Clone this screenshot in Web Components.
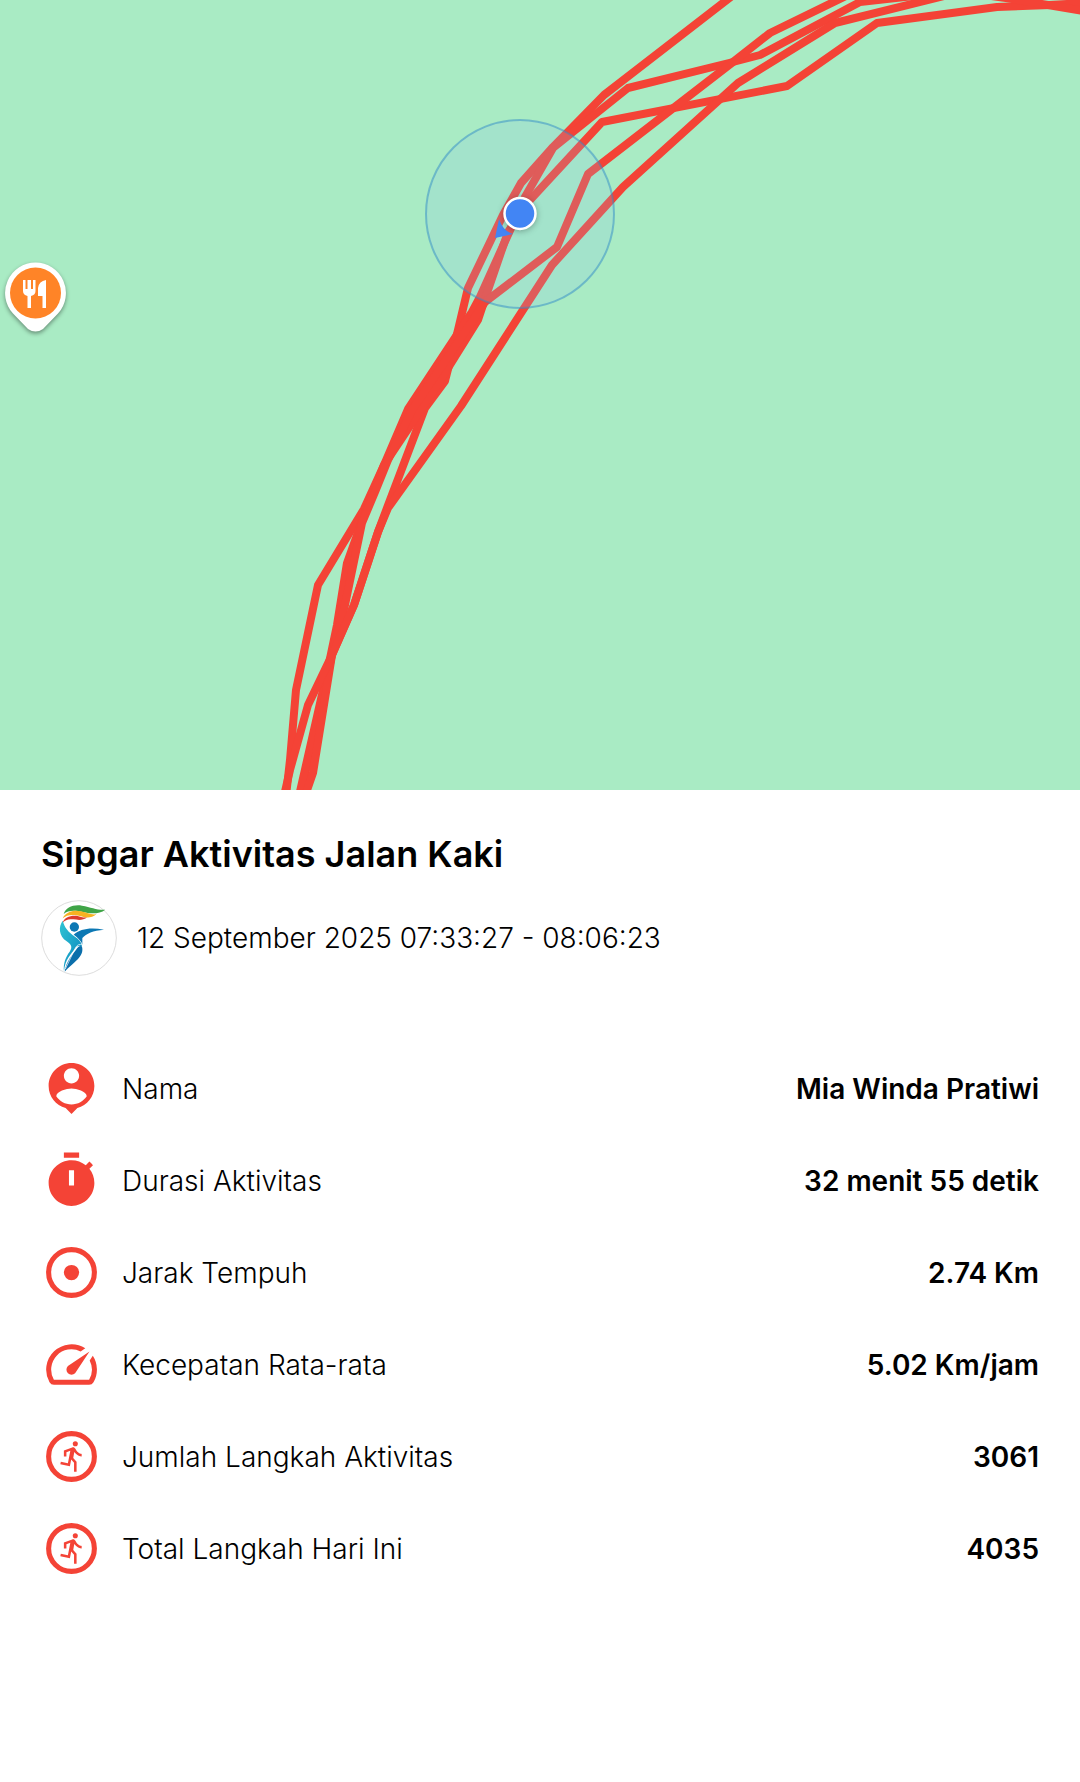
<!DOCTYPE html>
<html lang="id">
<head>
<meta charset="utf-8">
<meta name="viewport" content="width=device-width, initial-scale=1">
<title>Sipgar Aktivitas Jalan Kaki</title>
<style>
  body {
    margin: 0;
    background: #fff;
    color: #000;
    font-family: Inter, "Open Sans", sans-serif;
  }
</style>
</head>
<body>
<activity-page>
  <route-map slot="map"></route-map>
  <activity-header>
    Sipgar Aktivitas Jalan Kaki
    <time slot="time" datetime="2025-09-12T07:33:27">12 September 2025 07:33:27 - 08:06:23</time>
  </activity-header>
  <stat-list>
    <stat-row icon="person">Nama<b slot="value">Mia Winda Pratiwi</b></stat-row>
    <stat-row icon="timer">Durasi Aktivitas<b slot="value">32 menit 55 detik</b></stat-row>
    <stat-row icon="target">Jarak Tempuh<b slot="value">2.74 Km</b></stat-row>
    <stat-row icon="speed">Kecepatan Rata-rata<b slot="value">5.02 Km/jam</b></stat-row>
    <stat-row icon="run">Jumlah Langkah Aktivitas<b slot="value">3061</b></stat-row>
    <stat-row icon="run">Total Langkah Hari Ini<b slot="value">4035</b></stat-row>
  </stat-list>
</activity-page>

<script>
const ring = '<circle cx="12" cy="12" r="9" fill="none" stroke="currentColor" stroke-width="2"/>';

const icons = {
  person: '<path d="M12 2c-4.97 0-9 4.03-9 9 0 4.17 2.84 7.67 6.69 8.69L12 22l2.31-2.31C18.16 18.67 21 15.17 21 11c0-4.97-4.03-9-9-9zm0 2c1.66 0 3 1.34 3 3s-1.34 3-3 3-3-1.34-3-3 1.34-3 3-3zm0 14.3c-2.5 0-4.71-1.28-6-3.22.03-1.99 4-3.08 6-3.08 1.99 0 5.97 1.09 6 3.08-1.29 1.94-3.5 3.22-6 3.22z"/>',
  timer: '<path fill-rule="evenodd" d="M15 1H9v2h6V1zM11 14h2V8h-2v6zM19.03 7.39l1.42-1.42c-.43-.51-.9-.99-1.41-1.41l-1.42 1.42C16.07 4.74 14.12 4 12 4c-4.97 0-9 4.03-9 9s4.02 9 9 9 9-4.03 9-9c0-2.12-.74-4.07-1.97-5.61z"/>',
  target: ring + '<circle cx="12" cy="12" r="3"/>',
  speed: '<path d="m20.38 8.57-1.23 1.85a8 8 0 0 1-.22 7.58H5.07A8 8 0 0 1 15.58 6.85l1.85-1.23A10 10 0 0 0 3.35 19a2 2 0 0 0 1.72 1h13.85a2 2 0 0 0 1.74-1 10 10 0 0 0-.27-10.44zm-9.79 6.84a2 2 0 0 0 2.83 0l5.66-8.49-8.49 5.66a2 2 0 0 0 0 2.83z"/>',
  run: ring + '<circle cx="13.5" cy="7" r="1"/><path d="M16 12c-.7 0-2.01-.54-2.91-1.76l-.41 2.35L14 14.03V18h-1v-3.58l-1.11-1.21-.52 2.64-3.77-.77.2-.98 2.78.57.96-4.89-1.54.57V12H9V9.65l3.28-1.21c.49-.18 1.03.06 1.26.53C14.37 10.67 15.59 11 16 11v1z"/>'
};

const laps = [
  '732,-4 604,95 553,147 521,183 503,215 468,288 458,330 445,381 425,408 387,508 378,532 354,605 332,655 322,700 300,796',
  '914,-4 860,2 760,55 733,62 628,88 553,148 525,197 507,237 480,297 472,312 408,409 384,465 364,509 318,585 296,690 290,760 286,796',
  '1084,3 1050,5 997,7 877,23 787,86 602,122 530,200 508,232 487,293 478,320 440,381 384,465 366,510 347,563 337,625 328,668 299,796',
  '850,-6 770,33 733,62 588,174 557,247 485,302 475,317 412,410 388,460 375,492 362,523 345,605 332,655 313,773 305,796',
  '944,-4 835,23 738,83 623,187 552,265 461,406 388,508 378,532 354,605 332,655 308,705 290,770 284,796',
  '984,-5 1006,-2 1084,11'
];

class RouteMap extends HTMLElement {
  constructor() {
    super();
    this.attachShadow({ mode: 'open' });
    this.shadowRoot.innerHTML = `
      <style>
        :host {
          display: block;
          background: #a9ebc4;
        }
        svg {
          display: block;
          width: 100%;
          height: auto;
        }
        .lap {
          fill: none;
          stroke: #f44336;
          stroke-width: 8;
          stroke-linejoin: round;
        }
        .pin {
          filter: drop-shadow(0 2px 2px rgba(0, 0, 0, .4));
        }
        .me {
          filter: drop-shadow(0 1px 3px rgba(0, 0, 0, .3));
        }
      </style>
      <svg viewBox="0 0 1080 790" role="img" aria-label="Peta rute">
        ${laps.map(points => `<polyline class="lap" points="${points}"/>`).join('')}
        <circle cx="520" cy="214" r="94" fill="rgba(139, 195, 236, .2)" stroke="rgba(50, 140, 200, .5)" stroke-width="2"/>
        <path d="M499 219Q503 231 513 234L495 238Z" fill="#4285f4"/>
        <circle class="me" cx="520" cy="213.5" r="15.5" fill="#4285f4" stroke="#fff" stroke-width="2.5"/>
        <g class="pin">
          <path d="M35.5 262.5a30.5 30.5 0 0 1 22.5 51L43 329q-7.5 5-15 0L13 313.500a30.5 30.5 0 0 1 22.5-51z" fill="#fff"/>
          <circle cx="35.5" cy="293" r="25.5" fill="#ff8427"/>
        </g>
        <g fill="#fff">
          <path d="M23 280h2.500v9h2v-9H31v9h2v-9h2.500v11q0 4-4.500 5v12h-3.500v-12q-4.500-1-4.500-5z"/>
          <path d="M46 280v28h-3.500v-12H38v-8q1-7 8-8z"/>
        </g>
      </svg>
    `;
  }
}

class ClubLogo extends HTMLElement {
  constructor() {
    super();
    this.attachShadow({ mode: 'open' });
    this.shadowRoot.innerHTML = `
      <style>
        :host {
          display: block;
          flex: none;
          width: 76px;
          height: 76px;
        }
        svg {
          display: block;
        }
      </style>
      <svg viewBox="15 15 228 228" role="img" aria-label="Sipgar">
        <defs>
          <linearGradient id="body" x1="0" y1="0" x2="1" y2="1">
            <stop offset="0" stop-color="#2fc3d3"/>
            <stop offset="1" stop-color="#0a86be"/>
          </linearGradient>
        </defs>
        <circle cx="129" cy="129" r="112" fill="#fff" stroke="#ddd" stroke-width="3"/>
        <path d="M83 57C89 37 112 28 138 32C166 37 184 46 208 44C190 58 163 56 140 51C115 45 96 46 83 57Z" fill="#3fa447"/>
        <path d="M80 70C89 51 112 44 135 49C154 54 164 60 181 58C166 71 150 69 135 64C112 57 93 58 80 70Z" fill="#f7b322"/>
        <path d="M80 84C84 67 105 60 125 63C140 67 145 69 154 67C141 77 126 75 112 73C97 71 88 74 80 84Z" fill="#dc3b2d"/>
        <circle cx="115" cy="96" r="14" fill="#0c78b4"/>
        <path d="M80 77C86 99 98 112 116 124C131 133 140 143 138 156C132 150 124 152 119 158C105 178 87 192 84 229C81 205 90 184 101 170C112 155 103 147 92 139C68 122 67 95 80 77Z" fill="url(#body)"/>
        <path d="M113 119C132 101 164 96 204 104C171 107 151 115 139 129L139 149C134 136 124 127 113 119Z" fill="#0c78b4"/>
        <path d="M86 230C91 198 108 181 124 159Q131 150 138 155C146 185 112 201 86 230Z" fill="#0b6fab"/>
        <path d="M113 121Q137 138 138 150Q128 144 119 157L88 222" fill="none" stroke="#fff" stroke-width="2"/>
      </svg>
    `;
  }
}

class ActivityHeader extends HTMLElement {
  constructor() {
    super();
    this.attachShadow({ mode: 'open' });
    this.shadowRoot.innerHTML = `
      <style>
        :host {
          display: flex;
          flex-direction: column;
          gap: 22px;
        }
        h1 {
          margin: 0;
          font-size: 36px;
          font-weight: 600;
          line-height: 48px;
        }
        .when {
          display: flex;
          align-items: center;
          gap: 20px;
          font-size: 28px;
          font-weight: 300;
          line-height: 40px;
        }
      </style>
      <h1><slot></slot></h1>
      <div class="when">
        <club-logo></club-logo>
        <slot name="time"></slot>
      </div>
    `;
  }
}

class StatList extends HTMLElement {
  constructor() {
    super();
    this.attachShadow({ mode: 'open' });
    this.shadowRoot.innerHTML = `
      <style>
        :host {
          display: flex;
          flex-direction: column;
          gap: 31px;
        }
      </style>
      <slot></slot>
    `;
  }
}

class StatRow extends HTMLElement {
  constructor() {
    super();
    this.attachShadow({ mode: 'open' });
    this.shadowRoot.innerHTML = `
      <style>
        :host {
          display: flex;
          align-items: center;
          gap: 20px;
          font-size: 28px;
          font-weight: 300;
          line-height: 40px;
        }
        svg {
          flex: none;
          width: 61px;
          height: 61px;
          color: #f44336;
          fill: currentColor;
        }
        .label {
          flex: 1;
        }
        ::slotted(b) {
          font-weight: 600;
          text-align: right;
        }
      </style>
      <svg viewBox="0 0 24 24" aria-hidden="true"></svg>
      <span class="label"><slot></slot></span>
      <slot name="value"></slot>
    `;
  }

  connectedCallback() {
    this.shadowRoot.querySelector('svg').innerHTML = icons[this.getAttribute('icon')];
  }
}

class ActivityPage extends HTMLElement {
  constructor() {
    super();
    this.attachShadow({ mode: 'open' });
    this.shadowRoot.innerHTML = `
      <style>
        :host {
          display: block;
        }
        main {
          display: flex;
          flex-direction: column;
          gap: 82px;
          padding: 40px 41px;
        }
      </style>
      <slot name="map"></slot>
      <main><slot></slot></main>
    `;
  }
}

customElements.define('route-map', RouteMap);
customElements.define('club-logo', ClubLogo);
customElements.define('activity-header', ActivityHeader);
customElements.define('stat-list', StatList);
customElements.define('stat-row', StatRow);
customElements.define('activity-page', ActivityPage);
</script>
</body>
</html>
